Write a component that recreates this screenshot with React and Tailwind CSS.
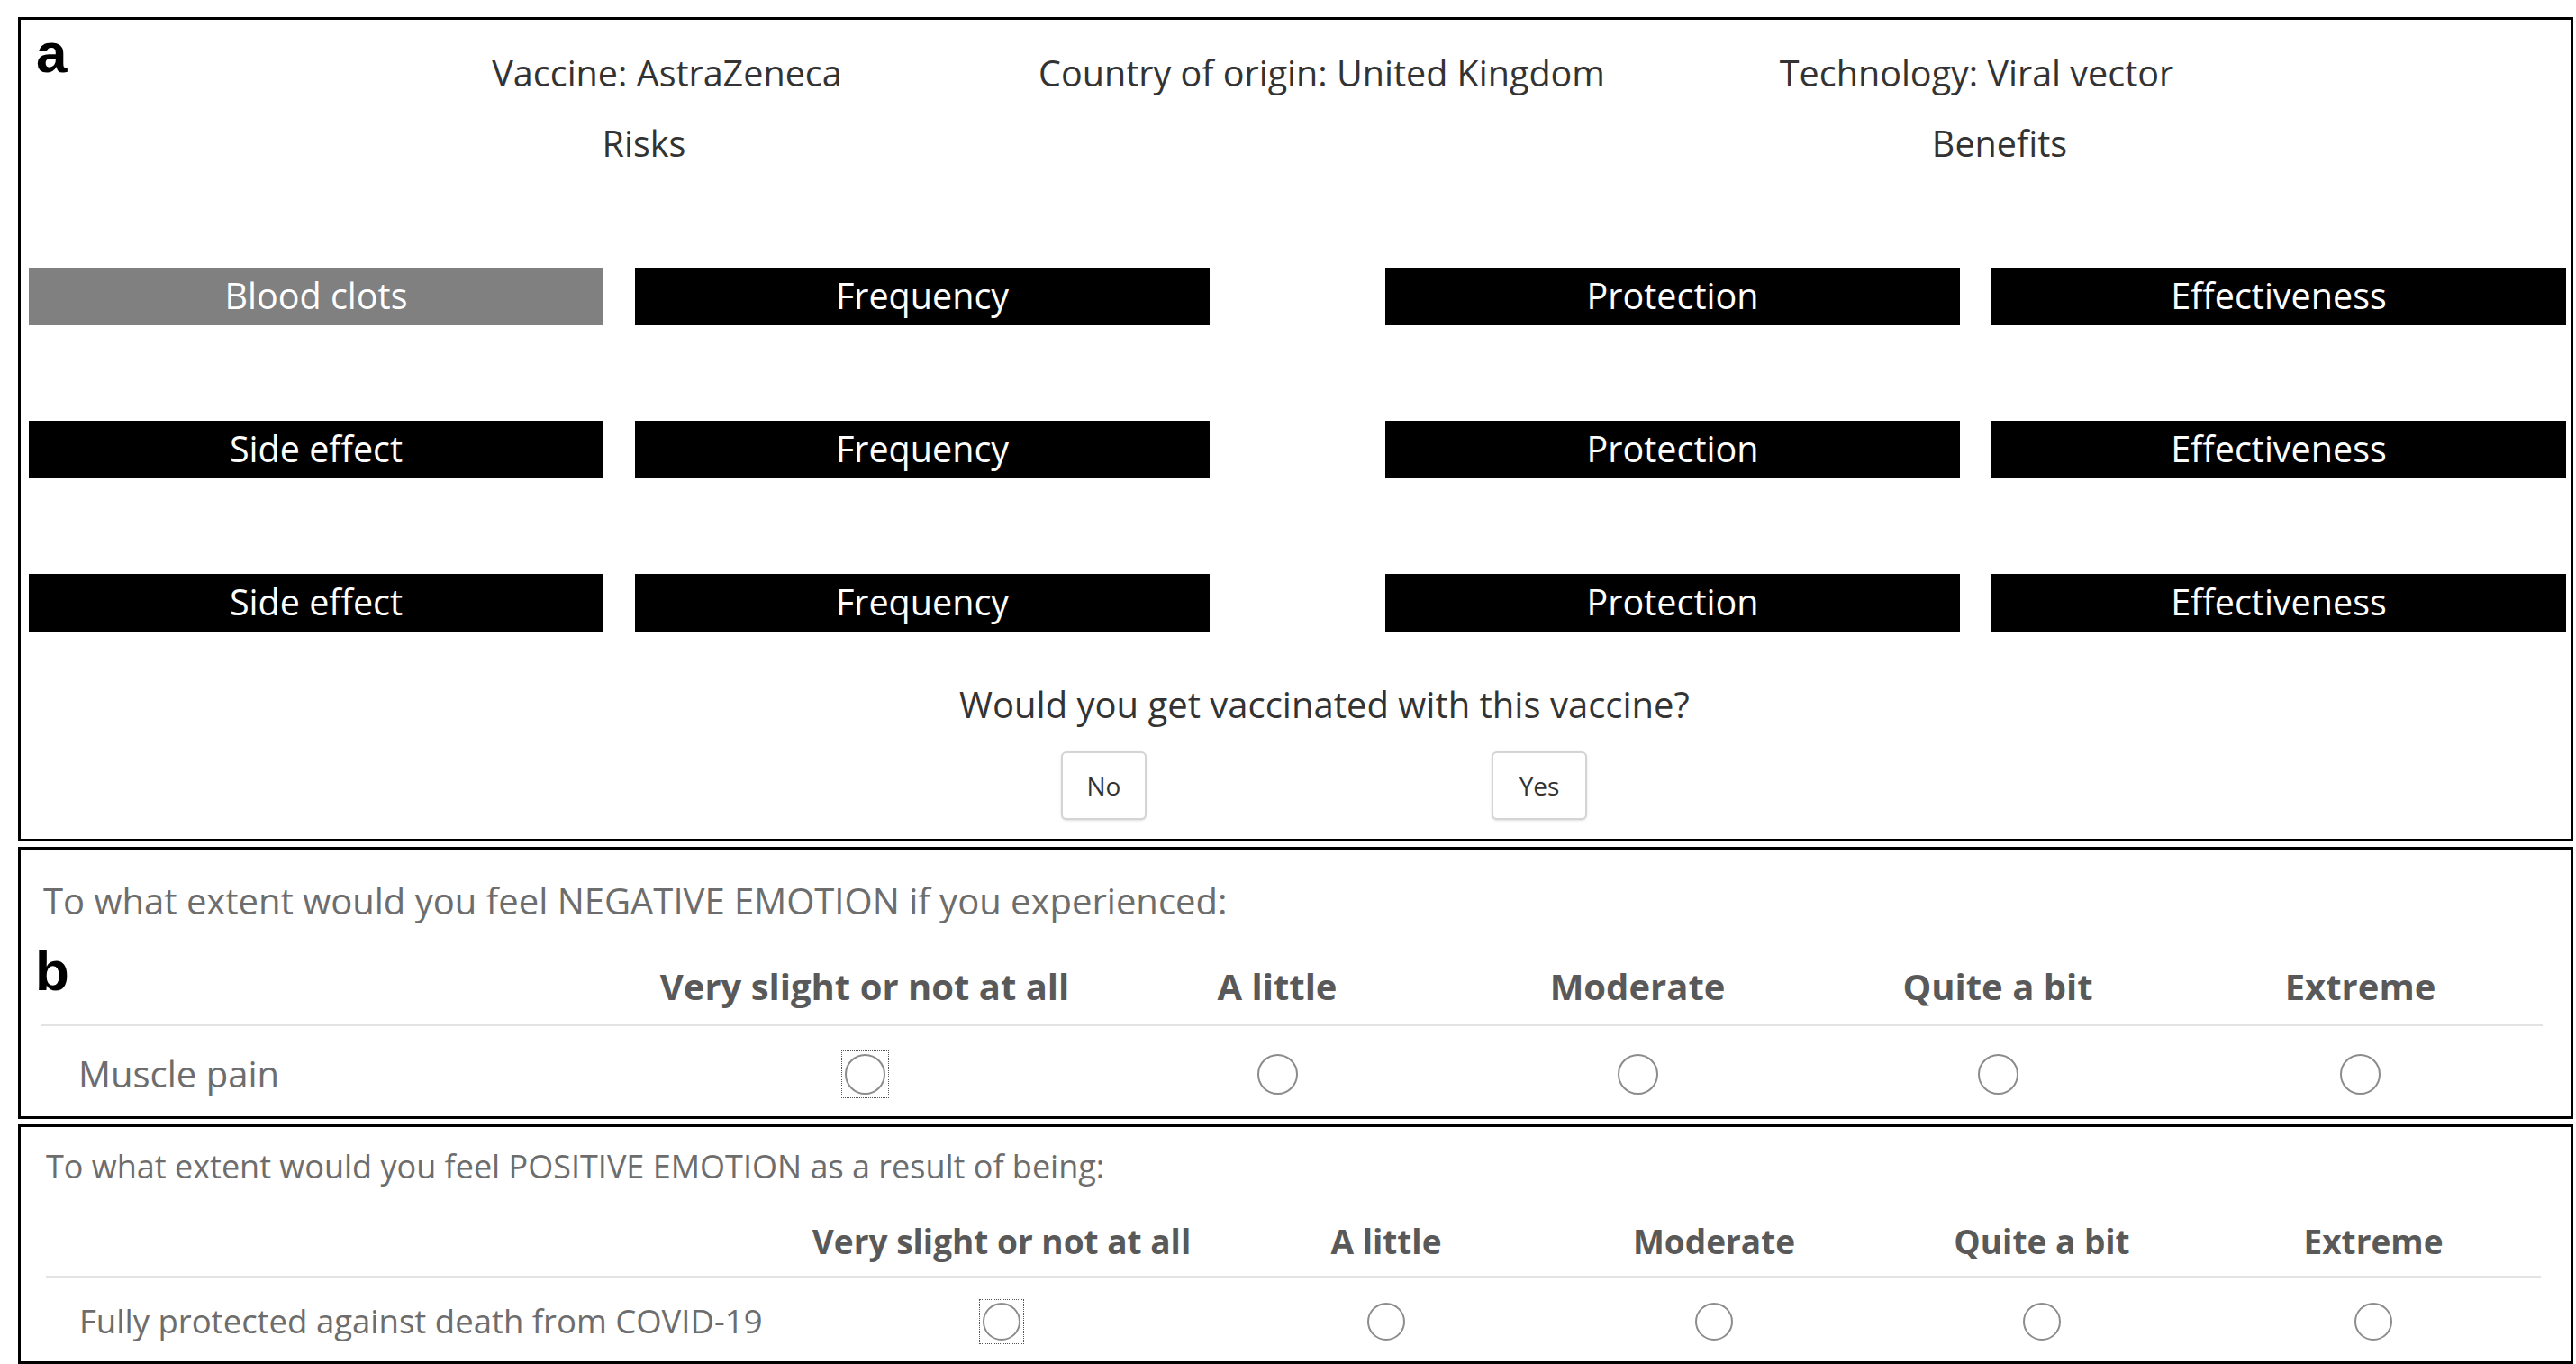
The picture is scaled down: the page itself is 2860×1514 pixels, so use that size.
const font = { fontFamily: '"Open Sans", "Noto Sans", sans-serif' };
const labelFont = { fontFamily: '"Liberation Sans Narrow", "Liberation Sans", Arial, sans-serif' };

function Radio({ size, focused }) {
  const circle = (
    <div
      className={
        size === 'lg'
          ? 'w-[45px] h-[45px] rounded-full border-2 border-[#8c8c8c] bg-white'
          : 'w-[42px] h-[42px] rounded-full border-2 border-[#8c8c8c] bg-white'
      }
    />
  );
  if (!focused) return circle;
  return <div className="border border-dotted border-[#555] p-[3px]">{circle}</div>;
}

function Box({ label, gray }) {
  return (
    <div
      className={
        'h-[64px] flex items-center justify-center text-white text-[39.5px] ' +
        (gray ? 'bg-[#808080]' : 'bg-black')
      }
    >
      {label}
    </div>
  );
}

const scale = ['Very slight or not at all', 'A little', 'Moderate', 'Quite a bit', 'Extreme'];

export default function App() {
  const rows = [
    ['Blood clots', true],
    ['Side effect', false],
    ['Side effect', false],
  ];

  return (
    <div className="bg-white min-h-screen pt-[19px] pl-[20px]" style={font}>
      <div className="w-[2837px] flex flex-col gap-[6px]">
        {/* panel a */}
        <div className="relative h-[915px] border-[3px] border-black flex flex-col">
          <div className="absolute top-[6px] left-[17px] text-[62px] font-bold leading-none text-black" style={labelFont}>
            a
          </div>
          <div className="mt-[35px] ml-[354px] grid grid-cols-[727px_727px_727px] h-[48px] items-center text-[39.5px] text-[#333] leading-[48px]">
            <div className="text-center">Vaccine: AstraZeneca</div>
            <div className="text-center">Country of origin: United Kingdom</div>
            <div className="text-center">Technology: Viral vector</div>
          </div>
          <div className="mt-[30px] flex h-[48px] items-center text-[39.5px] text-[#333] leading-[48px]">
            <div className="ml-[492px] w-[400px] text-center">Risks</div>
            <div className="ml-[1105px] w-[400px] text-center">Benefits</div>
          </div>
          <div className="mt-[114px] ml-[9px] flex flex-col gap-[106px]">
            {rows.map(([label, gray], i) => (
              <div key={i} className="grid grid-cols-[638px_638px_638px_638px] gap-x-[35px]">
                <Box label={label} gray={gray} />
                <Box label="Frequency" />
                <div className="ml-[160px] w-[638px]">
                  <Box label="Protection" />
                </div>
                <div className="ml-[160px] w-[638px]">
                  <Box label="Effectiveness" />
                </div>
              </div>
            ))}
          </div>
          <div className="mt-[57px] h-[48px] leading-[48px] text-[40px] text-[#333] ml-[1042px]">
            Would you get vaccinated with this vaccine?
          </div>
          <div className="mt-[28px] flex ml-[1155px]">
            <button className="w-[95px] h-[76px] rounded-[6px] border-2 border-[#d4d4d4] text-[28px] text-[#333] bg-white shadow-sm">
              No
            </button>
            <button className="ml-[383px] w-[106px] h-[76px] rounded-[6px] border-2 border-[#d4d4d4] text-[28px] text-[#333] bg-white shadow-sm">
              Yes
            </button>
          </div>
        </div>

        {/* panel b */}
        <div className="relative h-[302px] border-[3px] border-black">
          <div className="absolute top-[104px] left-[16px] text-[62px] font-bold leading-none text-black" style={labelFont}>
            b
          </div>
          <div className="ml-[23px] mr-[31px]">
            <div className="pt-[33px] h-[81px] pl-[2px] text-[40px] leading-[48px] text-[#6d6d6d]">
              To what extent would you feel NEGATIVE EMOTION if you experienced:
            </div>
            <div className="grid grid-cols-[656px_516px_400px_400px_400px_405px] h-[115px] pt-[47px] border-b-2 border-[#e3e3e3] text-[40px] leading-[48px] font-bold text-[#595959]">
              <div />
              {scale.map((s) => (
                <div key={s} className="text-center">{s}</div>
              ))}
            </div>
            <div className="grid grid-cols-[656px_516px_400px_400px_400px_405px] h-[98px] items-center pt-[8px]">
              <div className="pl-[41px] text-[40px] text-[#6d6d6d]">Muscle pain</div>
              {scale.map((s, i) => (
                <div key={s} className="flex justify-center">
                  <Radio size="lg" focused={i === 0} />
                </div>
              ))}
            </div>
          </div>
        </div>

        {/* panel c */}
        <div className="h-[266px] border-[3px] border-black">
          <div className="ml-[28px] mr-[33px]">
            <div className="pt-[22px] h-[66px] text-[36px] leading-[44px] text-[#6d6d6d]">
              To what extent would you feel POSITIVE EMOTION as a result of being:
            </div>
            <div className="grid grid-cols-[816px_490px_364px_364px_364px_372px] h-[101px] pt-[39px] border-b-2 border-[#e3e3e3] text-[37px] leading-[44px] font-bold text-[#595959]">
              <div />
              {scale.map((s) => (
                <div key={s} className="text-center">{s}</div>
              ))}
            </div>
            <div className="grid grid-cols-[816px_490px_364px_364px_364px_372px] h-[91px] items-center pt-[6px]">
              <div className="pl-[37px] text-[36.5px] text-[#6d6d6d]">Fully protected against death from COVID-19</div>
              {scale.map((s, i) => (
                <div key={s} className="flex justify-center">
                  <Radio size="sm" focused={i === 0} />
                </div>
              ))}
            </div>
          </div>
        </div>
      </div>
    </div>
  );
}
